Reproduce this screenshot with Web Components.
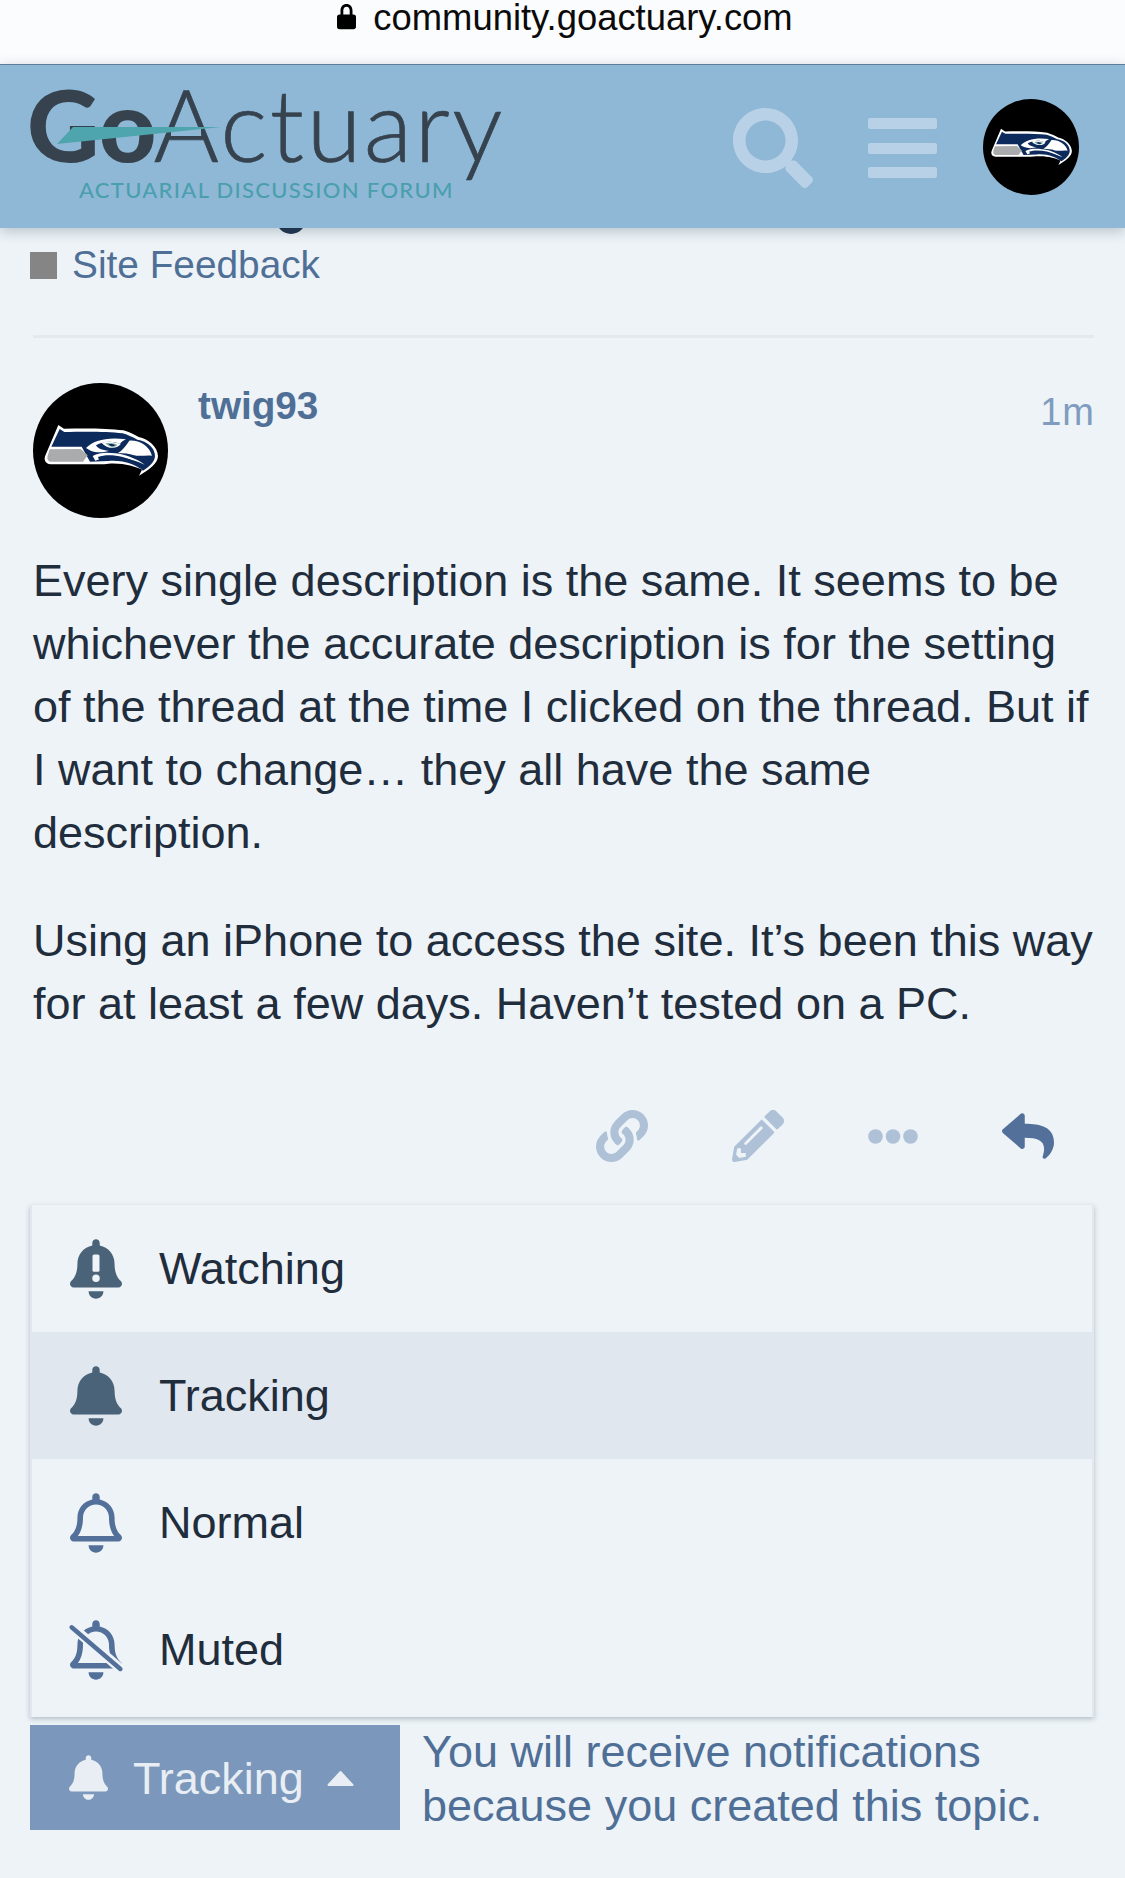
<!DOCTYPE html>
<html>
<head>
<meta charset="utf-8">
<title>community.goactuary.com</title>
<style>
  html, body { margin: 0; padding: 0; }
  body {
    width: 1125px;
    height: 1878px;
    overflow: hidden;
    background: #edf3f7;
    color: #1f2d3d;
    font-family: "Liberation Sans", Arial, sans-serif;
  }
</style>
</head>
<body>
<browser-bar>community.goactuary.com</browser-bar>
<site-header></site-header>
<category-line>Site Feedback</category-line>
<topic-post username="twig93" age="1m">
  <p>Every single description is the same. It seems to be whichever the accurate description is for the setting of the thread at the time I clicked on the thread. But if I want to change… they all have the same description.</p>
  <p>Using an iPhone to access the site. It’s been this way for at least a few days. Haven’t tested on a PC.</p>
</topic-post>
<post-actions></post-actions>
<notification-menu>
  <menu-row icon="watching">Watching</menu-row>
  <menu-row icon="tracking" selected>Tracking</menu-row>
  <menu-row icon="normal">Normal</menu-row>
  <menu-row icon="muted">Muted</menu-row>
</notification-menu>
<notification-footer>You will receive notifications because you created this topic.</notification-footer>

<script>
const BELL = "M224 512c35.32 0 63.97-28.65 63.97-64H160.03c0 35.35 28.65 64 63.97 64zm215.39-149.71c-19.32-20.76-55.47-51.99-55.47-154.29 0-77.7-54.48-139.9-127.94-155.16V32c0-17.67-14.32-32-31.98-32s-31.98 14.33-31.98 32v20.84C118.56 68.1 64.08 130.3 64.08 208c0 102.3-36.15 133.53-55.47 154.29-6 6.45-8.66 14.16-8.61 21.71.11 16.4 12.98 32 32.1 32h383.8c19.12 0 32-15.6 32.1-32 .05-7.55-2.61-15.27-8.61-21.71z";
const BELL_OUTLINE = "M439.39 362.29c-19.32-20.76-55.47-51.99-55.47-154.29 0-77.7-54.48-139.9-127.94-155.16V32c0-17.67-14.32-32-31.98-32s-31.98 14.33-31.98 32v20.84C118.56 68.1 64.08 130.3 64.08 208c0 102.3-36.15 133.53-55.47 154.29-6 6.45-8.66 14.16-8.61 21.71.11 16.4 12.98 32 32.1 32h383.8c19.12 0 32-15.6 32.1-32 .05-7.55-2.61-15.27-8.61-21.71zM67.53 368c21.22-27.97 44.42-74.33 44.53-159.42 0-.2-.06-.38-.06-.58 0-61.86 50.14-112 112-112s112 50.14 112 112c0 .2-.06.38-.06.58.11 85.1 23.31 131.46 44.53 159.42H67.53zM224 512c35.32 0 63.97-28.65 63.97-64H160.03c0 35.35 28.65 64 63.97 64z";

class BrowserBar extends HTMLElement {
  constructor() {
    super();
    this.attachShadow({ mode: "open" });
  }
  connectedCallback() {
    this.shadowRoot.innerHTML = `
      <style>
        :host {
          display: flex;
          justify-content: center;
          height: 64px;
          background: #fbfcfd;
          color: #0b0b0b;
          font: 36.400px/35px "Liberation Sans", Arial, sans-serif;
        }
        .url { display: flex; align-items: flex-start; gap: 17px; margin-left: 5px; }
        svg { width: 19px; height: 27px; margin-top: 3px; }
      </style>
      <div class="url">
        <svg viewBox="0 0 19 26"><path fill="#000" d="M3.5 11V7.2C3.5 3.2 6 .6 9.5.6s6 2.6 6 6.6V11h1c1.600 0 2.500 1 2.500 2.600v9.500c0 1.800-.9 2.700-2.600 2.700H2.600C.9 25.800 0 24.900 0 23.100v-9.500C0 12 .9 11 2.500 11zm2.800 0h6.400V7.100c0-2.300-1.300-3.900-3.200-3.900S6.300 4.800 6.300 7.100z"/></svg>
        <span><slot></slot></span>
      </div>`;
  }
}
customElements.define("browser-bar", BrowserBar);

class HawkAvatar extends HTMLElement {
  constructor() {
    super();
    this.attachShadow({ mode: "open" });
  }
  connectedCallback() {
    const size = this.getAttribute("size") || 135;
    this.shadowRoot.innerHTML = `
      <style>
        :host { display: block; width: ${size}px; height: ${size}px; flex: none; }
        svg { display: block; width: 100%; height: 100%; }
      </style>
      <svg viewBox="0 0 405 405">
        <circle cx="202.500" cy="202.500" r="202.500" fill="#000"/>
        <g transform="translate(21 111)">
          <path fill="#fff" d="M55 15L72 26C130 25 200 24 250 31C270 37 284 45 296 51C326 57 352 80 354 108C354 131 326 150 297 167L306 149C285 139 250 128 205 131C190 133 170 133 150 133L32 133C15 131 10 118 17 104Z"/>
          <path fill="#0d2a5c" d="M59 27L73 36C130 35 200 34 248 40C264 45 279 52 292 59C322 63 345 84 345 108C345 125 326 142 309 152C290 135 250 119 205 123L150 125L125 80L34 80Z"/>
          <path fill="#a9abad" d="M29 88L122 87L143 106L129 125L32 125C22 123 20 113 24 104Z"/>
          <path fill="#fff" d="M138 84C160 60 205 50 258 58C250 62 244 66 240 72C220 62 190 62 168 76C172 84 186 92 206 92C190 98 168 98 152 92Z"/>
          <path fill="#fff" d="M184 68C204 62 228 66 242 72C234 86 204 90 184 68Z"/>
          <path fill="#7fae9f" d="M196 70C208 68 224 70 232 74C226 83 208 84 196 70Z"/>
          <path fill="#0d2a5c" d="M206 72C214 71 222 73 226 75C220 81 211 80 206 72Z"/>
          <path fill="#fff" d="M268 62C298 60 328 78 336 107C316 105 300 110 282 106C268 100 250 100 234 99C246 92 258 78 268 62Z"/>
          <path fill="#fff" d="M158 108C182 94 220 98 250 104C272 110 300 122 314 134C290 122 250 111 220 110C200 110 182 116 166 122Z"/>
          <path fill="#0d2a5c" d="M174 111C194 104 222 105 248 111C268 116 284 124 300 132C270 121 244 115 220 114C204 114 188 118 178 122Z"/>
        </g>
      </svg>`;
  }
}
customElements.define("hawk-avatar", HawkAvatar);

class SiteLogo extends HTMLElement {
  constructor() {
    super();
    this.attachShadow({ mode: "open" });
  }
  connectedCallback() {
    this.shadowRoot.innerHTML = `
      <style>
        :host {
          display: block;
          position: relative;
          width: 480px;
          color: #36434f;
          font-family: Lato, "Liberation Sans", sans-serif;
        }
        .word { display: flex; align-items: baseline; height: 101px; line-height: 101px; font-size: 100px; white-space: nowrap; }
        .go { font-weight: 900; letter-spacing: 0; margin-left: -1px; }
        .actuary { font-weight: 300; margin-left: -3px; letter-spacing: 2.400px; -webkit-text-stroke: .7px #36434f; }
        .tag {
          margin: 5px 0 0 51px;
          color: #4a9fae;
          font-size: 22px;
          line-height: 22px;
          font-weight: 500;
          letter-spacing: 1.300px;
          white-space: nowrap;
        }
        svg { position: absolute; left: 0; top: 0; width: 240px; height: 80px; }
      </style>
      <div class="word"><span class="go">Go</span><span class="actuary">Actuary</span></div>
      <div class="tag">ACTUARIAL DISCUSSION FORUM</div>
      <svg viewBox="0 0 240 80"><rect x="143" y="54" width="30" height="9" fill="#8fb8d6"/><polygon fill="#4ea5ad" points="29,71 45,54 193,54"/></svg>`;
  }
}
customElements.define("site-logo", SiteLogo);

class SiteHeader extends HTMLElement {
  constructor() {
    super();
    this.attachShadow({ mode: "open" });
  }
  connectedCallback() {
    this.shadowRoot.innerHTML = `
      <style>
        :host {
          display: flex;
          align-items: flex-start;
          position: relative;
          z-index: 2;
          box-sizing: border-box;
          height: 164px;
          padding: 8px 46px 0 28px;
          background: #8fb8d6;
          border-top: 1px solid #5d7d99;
          box-shadow: 0 3px 12px rgba(40, 60, 80, .28);
        }
        .tools { margin-left: auto; display: flex; align-items: center; margin-top: 26px; }
        .search { width: 80px; height: 80px; display: block; margin-right: 55px; margin-top: 2px; }
        .menu { display: flex; flex-direction: column; gap: 13.500px; width: 69px; margin-right: 46px; margin-top: 2px; }
        .menu i { display: block; height: 11px; background: #b9d1e6; border-radius: 2px; }
      </style>
      <site-logo></site-logo>
      <div class="tools">
        <svg class="search" viewBox="0 0 512 512"><path fill="#b9d1e6" d="M505 442.700L405.300 343c-4.500-4.500-10.600-7-17-7H372c27.600-35.300 44-79.700 44-128C416 93.100 322.900 0 208 0S0 93.100 0 208s93.100 208 208 208c48.300 0 92.700-16.400 128-44v16.300c0 6.400 2.500 12.500 7 17l99.700 99.700c9.400 9.400 24.600 9.400 33.900 0l28.300-28.300c9.400-9.400 9.400-24.600.1-34zM208 336c-70.700 0-128-57.200-128-128 0-70.700 57.200-128 128-128 70.700 0 128 57.200 128 128 0 70.700-57.200 128-128 128z"/></svg>
        <div class="menu"><i></i><i></i><i></i></div>
        <hawk-avatar size="96"></hawk-avatar>
      </div>`;
  }
}
customElements.define("site-header", SiteHeader);

class CategoryLine extends HTMLElement {
  constructor() {
    super();
    this.attachShadow({ mode: "open" });
  }
  connectedCallback() {
    this.shadowRoot.innerHTML = `
      <style>
        :host {
          display: block;
          position: relative;
          margin: 0 31px 0 33px;
          height: 110px;
          border-bottom: 3px solid #e3e9ee;
          box-sizing: border-box;
          color: #4f6f96;
          font-size: 38.800px;
        }
        .row { display: flex; align-items: center; gap: 15px; margin-left: -3px; padding-top: 15px; line-height: 44px; }
        .box { width: 27px; height: 27px; background: #858585; }
        .peek { position: absolute; left: 243px; top: -24px; width: 30px; height: 30px; border-radius: 50%; background: #1f3350; }
      </style>
      <div class="peek"></div>
      <div class="row"><span class="box"></span><span><slot></slot></span></div>`;
  }
}
customElements.define("category-line", CategoryLine);

class TopicPost extends HTMLElement {
  constructor() {
    super();
    this.attachShadow({ mode: "open" });
  }
  connectedCallback() {
    const username = this.getAttribute("username");
    const age = this.getAttribute("age");
    this.shadowRoot.innerHTML = `
      <style>
        :host { display: block; padding: 45px 31px 0 33px; }
        .top { display: flex; align-items: flex-start; height: 135px; }
        .name { margin-left: 30px; margin-top: 1px; color: #4f6f96; font-weight: bold; font-size: 38.700px; line-height: 44px; }
        .age { margin-left: auto; margin-top: 7px; margin-right: -1px; color: #7f9cc0; font-size: 38px; line-height: 44px; letter-spacing: 1px; }
        .body { margin-top: 31px; font-size: 45px; line-height: 63px; color: #1f2d3d; }
        ::slotted(p) { margin: 0 0 45px; }
        ::slotted(p:last-child) { margin-bottom: 0; }
      </style>
      <div class="top">
        <hawk-avatar size="135"></hawk-avatar>
        <span class="name">${username}</span>
        <span class="age">${age}</span>
      </div>
      <div class="body"><slot></slot></div>`;
  }
}
customElements.define("topic-post", TopicPost);

class PostActions extends HTMLElement {
  constructor() {
    super();
    this.attachShadow({ mode: "open" });
  }
  connectedCallback() {
    this.shadowRoot.innerHTML = `
      <style>
        :host { display: flex; justify-content: flex-end; align-items: center; gap: 84px; height: 52px; margin-top: 75px; padding-right: 71px; }
        svg { display: block; height: 52px; width: 52px; fill: #afc1d7; }
        .dots { height: 15px; width: 50px; }
        .reply { fill: #527099; }
      </style>
      <svg viewBox="0 0 512 512"><path d="M326.612 185.391c59.747 59.809 58.927 155.698.36 214.59-.11.12-.24.25-.36.37l-67.2 67.2c-59.27 59.27-155.699 59.262-214.96 0-59.27-59.26-59.27-155.7 0-214.96l37.106-37.106c9.84-9.84 26.786-3.3 27.294 10.606.648 17.722 3.826 35.527 9.69 52.721 1.986 5.822.567 12.262-3.783 16.612l-13.087 13.087c-28.026 28.026-28.905 73.66-1.155 101.96 28.024 28.579 74.086 28.749 102.325.51l67.2-67.19c28.191-28.191 28.073-73.757 0-101.83-3.701-3.694-7.429-6.564-10.341-8.569a16.037 16.037 0 0 1-6.947-12.606c-.396-10.567 3.348-21.456 11.698-29.806l21.054-21.055c5.521-5.521 14.182-6.199 20.584-1.731a152.482 152.482 0 0 1 20.522 17.197zM467.547 44.449c-59.261-59.262-155.69-59.27-214.96 0l-67.2 67.2c-.12.12-.25.25-.36.37-58.566 58.892-59.387 154.781.36 214.59a152.454 152.454 0 0 0 20.521 17.196c6.402 4.468 15.064 3.789 20.584-1.731l21.054-21.055c8.35-8.35 12.094-19.239 11.698-29.806a16.037 16.037 0 0 0-6.947-12.606c-2.912-2.005-6.64-4.875-10.341-8.569-28.073-28.073-28.191-73.639 0-101.83l67.2-67.19c28.239-28.239 74.3-28.069 102.325.51 27.75 28.3 26.872 73.934-1.155 101.96l-13.087 13.087c-4.35 4.35-5.769 10.79-3.783 16.612 5.864 17.194 9.042 34.999 9.69 52.721.509 13.906 17.454 20.446 27.294 10.606l37.106-37.106c59.271-59.259 59.271-155.699.001-214.959z"/></svg>
      <svg viewBox="0 0 512 512"><path d="M497.9 142.1l-46.1 46.1c-4.7 4.7-12.3 4.7-17 0l-111-111c-4.7-4.7-4.7-12.3 0-17l46.1-46.1c18.7-18.7 49.1-18.7 67.9 0l60.1 60.1c18.8 18.7 18.8 49.1 0 67.9zM284.2 99.8L21.6 362.4.4 483.9c-2.9 16.4 11.4 30.6 27.8 27.8l121.5-21.3 262.6-262.6c4.7-4.7 4.7-12.3 0-17l-111-111c-4.8-4.7-12.4-4.7-17.1 0zM124.1 339.9c-5.5-5.5-5.5-14.3 0-19.8l154-154c5.5-5.5 14.3-5.5 19.8 0s5.5 14.3 0 19.8l-154 154c-5.5 5.5-14.3 5.5-19.8 0zM88 424h48v36.3l-64.5 11.3-31.1-31.1L51.7 376H88v48z"/></svg>
      <svg class="dots" viewBox="0 0 50 15"><circle cx="7.500" cy="7.500" r="7.300"/><circle cx="25" cy="7.500" r="7.300"/><circle cx="42.500" cy="7.500" r="7.300"/></svg>
      <svg class="reply" viewBox="0 0 512 512"><path d="M8.309 189.836L184.313 37.851C199.719 24.546 224 35.347 224 56.015v80.053c160.629 1.839 288 34.032 288 186.258 0 61.441-39.581 122.309-83.333 154.132-13.653 9.931-33.111-2.533-28.077-18.631 45.344-145.012-21.507-183.51-176.59-185.742V360c0 20.7-24.3 31.453-39.687 18.164l-176.004-152c-11.071-9.562-11.086-26.753 0-36.328z"/></svg>`;
  }
}
customElements.define("post-actions", PostActions);

class NotificationMenu extends HTMLElement {
  constructor() {
    super();
    this.attachShadow({ mode: "open" });
  }
  connectedCallback() {
    this.shadowRoot.innerHTML = `
      <style>
        :host {
          display: block;
          box-sizing: border-box;
          margin: 43px 31px 0 30px;
          height: 512px;
          background: #eef3f7;
          border-left: 2px solid #e2e8ed;
          border-right: 2px solid #e2e8ed;
          box-shadow: 0 2px 5px rgba(60, 80, 100, .32);
        }
      </style>
      <slot></slot>`;
  }
}
customElements.define("notification-menu", NotificationMenu);

class MenuRow extends HTMLElement {
  constructor() {
    super();
    this.attachShadow({ mode: "open" });
  }
  connectedCallback() {
    const icon = this.getAttribute("icon");
    const glyphs = {
      watching: `<path fill="#4a6378" d="${BELL}"/><rect x="194" y="130" width="60" height="150" rx="14" fill="#eef3f7"/><circle cx="224" cy="335" r="32" fill="#eef3f7"/>`,
      tracking: `<path fill="#4a6378" d="${BELL}"/>`,
      normal: `<path fill="#527099" d="${BELL_OUTLINE}"/>`,
      muted: `<mask id="gap" maskUnits="userSpaceOnUse" x="-20" y="-20" width="490" height="550"><rect x="-20" y="-20" width="490" height="550" fill="#fff"/><line x1="0" y1="40" x2="448" y2="430" stroke="#000" stroke-width="84"/></mask><path fill="#527099" mask="url(#gap)" d="${BELL_OUTLINE}"/><line x1="14" y1="60" x2="434" y2="420" stroke="#527099" stroke-width="38" stroke-linecap="round"/>`
    };
    this.shadowRoot.innerHTML = `
      <style>
        :host {
          display: flex;
          align-items: center;
          gap: 37px;
          height: 127px;
          padding-left: 38px;
          font-size: 45px;
          color: #1f2d3d;
          background: ${this.hasAttribute("selected") ? "#e0e7ee" : "transparent"};
        }
        svg { display: block; width: 52px; height: 60px; overflow: visible; }
      </style>
      <svg viewBox="0 0 448 512">${glyphs[icon]}</svg>
      <span><slot></slot></span>`;
  }
}
customElements.define("menu-row", MenuRow);

class NotificationFooter extends HTMLElement {
  constructor() {
    super();
    this.attachShadow({ mode: "open" });
  }
  connectedCallback() {
    this.shadowRoot.innerHTML = `
      <style>
        :host { display: flex; align-items: center; gap: 22px; margin: 8px 31px 0 30px; height: 105px; }
        button {
          display: flex;
          align-items: center;
          gap: 25px;
          flex: none;
          box-sizing: border-box;
          width: 370px;
          height: 105px;
          padding: 0 0 0 39px;
          border: 0;
          background: #7b97bb;
          color: #e8eef4;
          font: 45px "Liberation Sans", Arial, sans-serif;
        }
        button span { margin-top: 2px; }
        .bell { width: 39px; height: 45px; display: block; }
        .caret { width: 27px; height: 16px; display: block; margin-left: -2px; }
        p { margin: 2px 0 0; font-size: 45px; line-height: 54px; color: #4f6f96; }
      </style>
      <button>
        <svg class="bell" viewBox="0 0 448 512"><path fill="#e8eef4" d="${BELL}"/></svg>
        <span>Tracking</span>
        <svg class="caret" viewBox="0 0 27 16"><polygon fill="#e8eef4" stroke="#e8eef4" stroke-width="2" stroke-linejoin="round" points="1.500,15 13.500,2 25.500,15"/></svg>
      </button>
      <p><slot></slot></p>`;
  }
}
customElements.define("notification-footer", NotificationFooter);
</script>
</body>
</html>
